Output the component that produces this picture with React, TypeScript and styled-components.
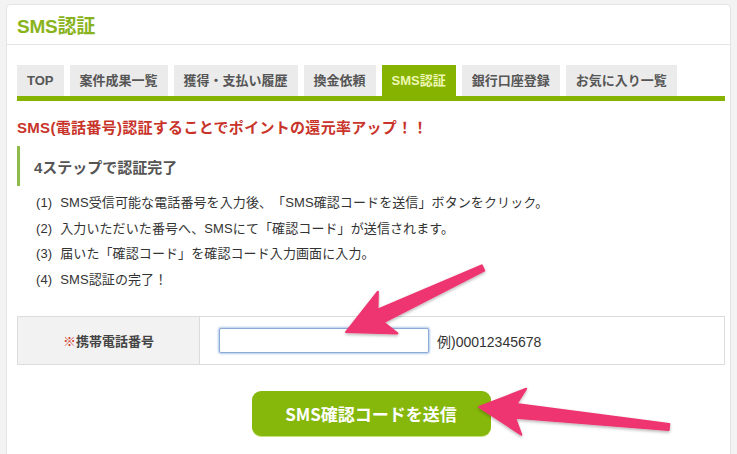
import styled, { createGlobalStyle } from "styled-components";

const tabs = [
  { text: "TOP" },
  { text: "案件成果一覧" },
  { text: "獲得・支払い履歴" },
  { text: "換金依頼" },
  { text: "SMS認証", active: true },
  { text: "銀行口座登録" },
  { text: "お気に入り一覧" },
];

const steps = [
  "SMS受信可能な電話番号を入力後、「SMS確認コードを送信」ボタンをクリック。",
  "入力いただいた番号へ、SMSにて「確認コード」が送信されます。",
  "届いた「確認コード」を確認コード入力画面に入力。",
  "SMS認証の完了！",
];

const GlobalStyle = createGlobalStyle`
  html, body {
    margin: 0;
    background: #f3f3f3;
  }
  body {
    font-family: "Liberation Sans", "Noto Sans CJK JP", sans-serif;
    color: #333;
  }
`;

const Page = styled.div`
  position: relative;
  height: 454px;
  overflow: hidden;
  padding: 4px 6px 0 6px;
  box-sizing: border-box;
`;

const Card = styled.section`
  background: #fff;
  border: 1px solid #e4e4e4;
  border-radius: 4px;
  min-height: 470px;
`;

const Header = styled.header`
  height: 39px;
  display: flex;
  align-items: center;
  padding: 0 10px;
  border-bottom: 1px solid #e4e4e4;
`;

const Title = styled.h1`
  margin: 0;
  font-size: 19px;
  font-weight: bold;
  color: #89b31c;
  letter-spacing: -0.2px;
`;

const Body = styled.div`
  padding: 20px 5px 0 10px;
`;

const TabBar = styled.nav`
  display: flex;
  gap: 6px;
  border-bottom: 5px solid #86b300;
`;

const Tab = styled.div<{ $active?: boolean }>`
  height: 31px;
  line-height: 31px;
  padding: 0 10px;
  font-size: 13px;
  font-weight: bold;
  background: ${(p) => (p.$active ? "#86b300" : "#ebebeb")};
  color: ${(p) => (p.$active ? "#eef8b4" : "#555")};
`;

const Lead = styled.p`
  margin: 16px 0 0;
  font-size: 15px;
  line-height: 22px;
  font-weight: bold;
  color: #c8342a;
  letter-spacing: 0.3px;
`;

const StepBox = styled.div`
  margin-top: 7px;
  height: 40px;
  display: flex;
  align-items: center;
  padding-left: 14px;
  border-left: 3px solid #8fbb4c;
  font-size: 15px;
  font-weight: bold;
  color: #555;
`;

const StepList = styled.ol`
  list-style: none;
  margin: 4px 0 0;
  padding: 0 0 0 19px;
  font-size: 13px;
  line-height: 25.5px;
  color: #333;
  letter-spacing: 0.1px;
  text-spacing-trim: space-all;
`;

const StepNum = styled.span`
  margin-right: 8px;
`;

const FormRow = styled.div`
  margin-top: 24px;
  display: flex;
  height: 47px;
  border: 1px solid #dcdcdc;
`;

const LabelCell = styled.div`
  width: 181px;
  flex: none;
  display: flex;
  align-items: center;
  justify-content: center;
  background: #f2f2f2;
  border-right: 1px solid #dcdcdc;
  font-size: 13px;
  font-weight: bold;
  color: #444;
`;

const Mark = styled.span`
  color: #d0392c;
  font-weight: normal;
`;

const InputCell = styled.div`
  display: flex;
  align-items: center;
  padding-left: 19px;
  gap: 8px;
  font-size: 14px;
  color: #333;
`;

const PhoneInput = styled.input`
  width: 210px;
  height: 25px;
  box-sizing: border-box;
  border: 1px solid #8eaad6;
  border-radius: 2px;
  box-shadow: 0 0 2px 1px rgba(120, 160, 215, 0.55);
  outline: none;
  background: #fff;
`;

const Actions = styled.div`
  display: flex;
  justify-content: center;
  margin-top: 26px;
`;

const SendButton = styled.button`
  width: 239px;
  height: 45px;
  border: none;
  border-radius: 9px;
  background: #86b80b;
  box-shadow: 0 1px 0 #c9e27a;
  color: #fff;
  font-family: "Noto Sans CJK JP", sans-serif;
  font-size: 17px;
  font-weight: bold;
  cursor: pointer;
`;

const Overlay = styled.svg`
  position: absolute;
  left: 0;
  top: 0;
  pointer-events: none;
`;

type Pt = [number, number];

// skitch-style arrow: tapered shaft, swept-back head
function arrowPoints(tip: Pt, tail: Pt, headLen: number, headW: number, neckW: number, tailW: number) {
  const dx = tail[0] - tip[0];
  const dy = tail[1] - tip[1];
  const len = Math.hypot(dx, dy);
  const ux = dx / len;
  const uy = dy / len;
  const px = -uy;
  const py = ux;
  const at = (d: number, w: number): string =>
    `${(tip[0] + ux * d + px * w).toFixed(1)},${(tip[1] + uy * d + py * w).toFixed(1)}`;
  return [
    at(0, 0),
    at(headLen, headW),
    at(headLen - 8, neckW),
    at(len, tailW),
    at(len, -tailW),
    at(headLen - 8, -neckW),
    at(headLen, -headW),
  ].join(" ");
}

function Arrows() {
  return (
    <Overlay width="737" height="454" viewBox="0 0 737 454">
      <defs>
        <filter id="shadow" x="-20%" y="-20%" width="140%" height="140%">
          <feDropShadow dx="0" dy="1.5" stdDeviation="1.5" floodColor="#000" floodOpacity="0.3" />
        </filter>
      </defs>
      <g fill="#ee3671" stroke="#ee3671" strokeWidth="2" strokeLinejoin="round" filter="url(#shadow)">
        <polygon points={arrowPoints([346, 332], [483, 268], 46, 23, 7, 3)} />
        <polygon points={arrowPoints([479, 407], [669, 427], 45, 23, 7, 3)} />
      </g>
    </Overlay>
  );
}

export default function App() {
  return (
    <>
      <GlobalStyle />
      <Page>
        <Card>
          <Header>
            <Title>SMS認証</Title>
          </Header>
          <Body>
            <TabBar>
              {tabs.map((t) => (
                <Tab key={t.text} $active={t.active}>
                  {t.text}
                </Tab>
              ))}
            </TabBar>
            <Lead>SMS(電話番号)認証することでポイントの還元率アップ！！</Lead>
            <StepBox>4ステップで認証完了</StepBox>
            <StepList>
              {steps.map((s, i) => (
                <li key={i}>
                  <StepNum>({i + 1})</StepNum>
                  {s}
                </li>
              ))}
            </StepList>
            <FormRow>
              <LabelCell>
                <Mark>※</Mark>携帯電話番号
              </LabelCell>
              <InputCell>
                <PhoneInput type="tel" />
                <span>例)00012345678</span>
              </InputCell>
            </FormRow>
            <Actions>
              <SendButton>SMS確認コードを送信</SendButton>
            </Actions>
          </Body>
        </Card>
        <Arrows />
      </Page>
    </>
  );
}
